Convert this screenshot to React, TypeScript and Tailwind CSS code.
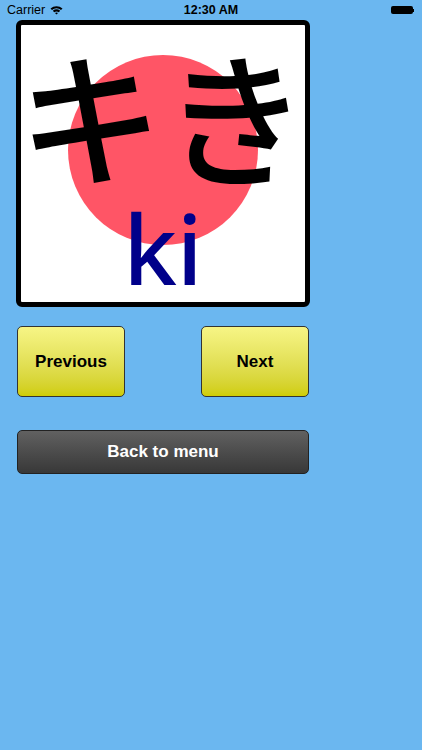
export default function App() {
  return (
    <div className="min-h-[750px] w-full bg-[#6bb7f0] font-['Liberation_Sans',Arial,sans-serif]">
      {/* status bar */}
      <div className="relative flex h-[20px] items-center px-[7px] text-[12.5px] text-black">
        <span className="flex items-center gap-[5px]">
          Carrier
          <svg width="13" height="10" viewBox="0 0 13 10">
            <path d="M0.5 3.5 A9 9 0 0 1 12.5 3.5 L11 5 A7 7 0 0 0 2 5 Z" fill="#000" />
            <path d="M2.8 5.8 A6 6 0 0 1 10.2 5.8 L8.8 7.2 A4 4 0 0 0 4.2 7.2 Z" fill="#000" />
            <path d="M5 8 A2.5 2.5 0 0 1 8 8 L6.5 9.6 Z" fill="#000" />
          </svg>
        </span>
        <span className="absolute left-1/2 -translate-x-1/2 font-semibold">12:30 AM</span>
        <span className="ml-auto mr-[1px] flex items-center">
          <span className="h-[8px] w-[22px] rounded-[2px] bg-black" />
          <span className="h-[3px] w-[1.5px] bg-black" />
        </span>
      </div>

      {/* flash card */}
      <div className="relative ml-[16px] h-[287px] w-[294px] overflow-hidden rounded-[6px] border-[5px] border-black bg-white">
        <div className="absolute left-[47px] top-[30px] h-[190px] w-[190px] rounded-full bg-[#ff5566]" />
        <div className="relative flex flex-col items-center">
          <div className="mt-[16px] whitespace-nowrap text-[145px] font-medium leading-none text-black font-['Noto_Sans_CJK_JP',sans-serif]">
            キき
          </div>
          <div className="mt-[14px] text-[96px] font-medium leading-none text-[#00008a] font-['Noto_Sans',sans-serif]">ki</div>
        </div>
      </div>

      {/* prev / next */}
      <div className="ml-[17px] mt-[19px] flex w-[292px] justify-between">
        <button className="flex h-[71px] w-[108px] items-center justify-center rounded-[5px] border border-[#333] bg-gradient-to-b from-[#f7f585] to-[#d0cd00] text-[17px] font-bold text-black">
          Previous
        </button>
        <button className="flex h-[71px] w-[108px] items-center justify-center rounded-[5px] border border-[#333] bg-gradient-to-b from-[#f7f585] to-[#d0cd00] text-[17px] font-bold text-black">
          Next
        </button>
      </div>

      {/* back */}
      <div className="ml-[17px] mt-[33px] w-[292px]">
        <button className="flex h-[44px] w-full items-center justify-center rounded-[5px] border border-[#222] bg-gradient-to-b from-[#616161] to-[#383838] text-[17px] font-bold text-white">
          Back to menu
        </button>
      </div>
    </div>
  );
}
